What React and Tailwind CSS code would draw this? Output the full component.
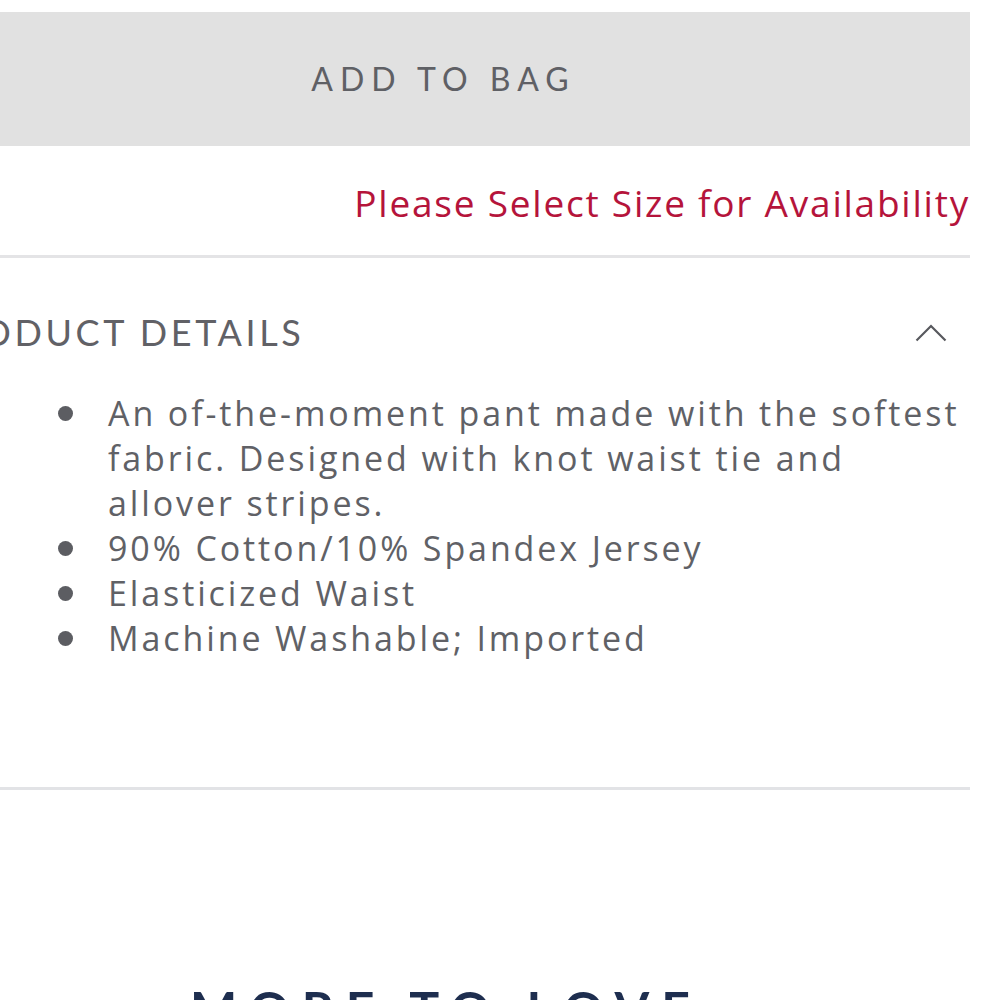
export default function App() {
  const bullets = [
    "An of-the-moment pant made with the softest fabric. Designed with knot waist tie and allover stripes.",
    "90% Cotton/10% Spandex Jersey",
    "Elasticized Waist",
    "Machine Washable; Imported",
  ];
  return (
    <div className="w-[1000px] h-[1000px] overflow-hidden bg-white" style={{ fontFamily: "Lato, 'Open Sans', sans-serif" }}>
      <div className="w-[1060px] ml-[-90px] pt-[12px]">
        <button className="w-full h-[134px] bg-[#e1e1e1] flex items-center justify-center">
          <span className="text-[32px] leading-none tracking-[0.22em] text-[#5f6065] pl-[0.22em]">ADD TO BAG</span>
        </button>
        <div className="mt-[39px] text-right text-[37px] leading-[36px] tracking-[0.048em] text-[#b5143b] font-['Open_Sans',sans-serif]">
          Please Select Size for Availability
        </div>
        <div className="mt-[34px] h-[3px] bg-[#e4e4e6]" />
        <div className="mt-[56px] flex items-center justify-between pl-[21px] pr-[23px]">
          <span className="text-[36px] leading-[36px] tracking-[0.1em] text-[#616166]">PRODUCT DETAILS</span>
          <svg width="32" height="19" viewBox="0 0 32 19" fill="none">
            <polyline points="1.5,17.5 16,3 30.5,17.5" stroke="#58595e" strokeWidth="2.2" />
          </svg>
        </div>
        <ul className="mt-[41px] pl-[148px] font-['Open_Sans',sans-serif]">
          {bullets.map((b) => (
            <li key={b} className="flex items-start text-[34px] leading-[45px] tracking-[0.085em] text-[#606166]">
              <span className="h-[45px] w-[16px] shrink-0 flex items-center">
                <span className="block w-[15px] h-[15px] rounded-full bg-[#5c5d62]" />
              </span>
              <span className="ml-[34px]">{b}</span>
            </li>
          ))}
        </ul>
        <div className="mt-[126px] h-[3px] bg-[#e2e3e6]" />
        <div className="mt-[194px] text-center text-[50px] leading-[50px] font-bold tracking-[0.24em] text-[#1e2e4f] pl-[0.24em]">
          MORE TO LOVE
        </div>
      </div>
    </div>
  );
}
